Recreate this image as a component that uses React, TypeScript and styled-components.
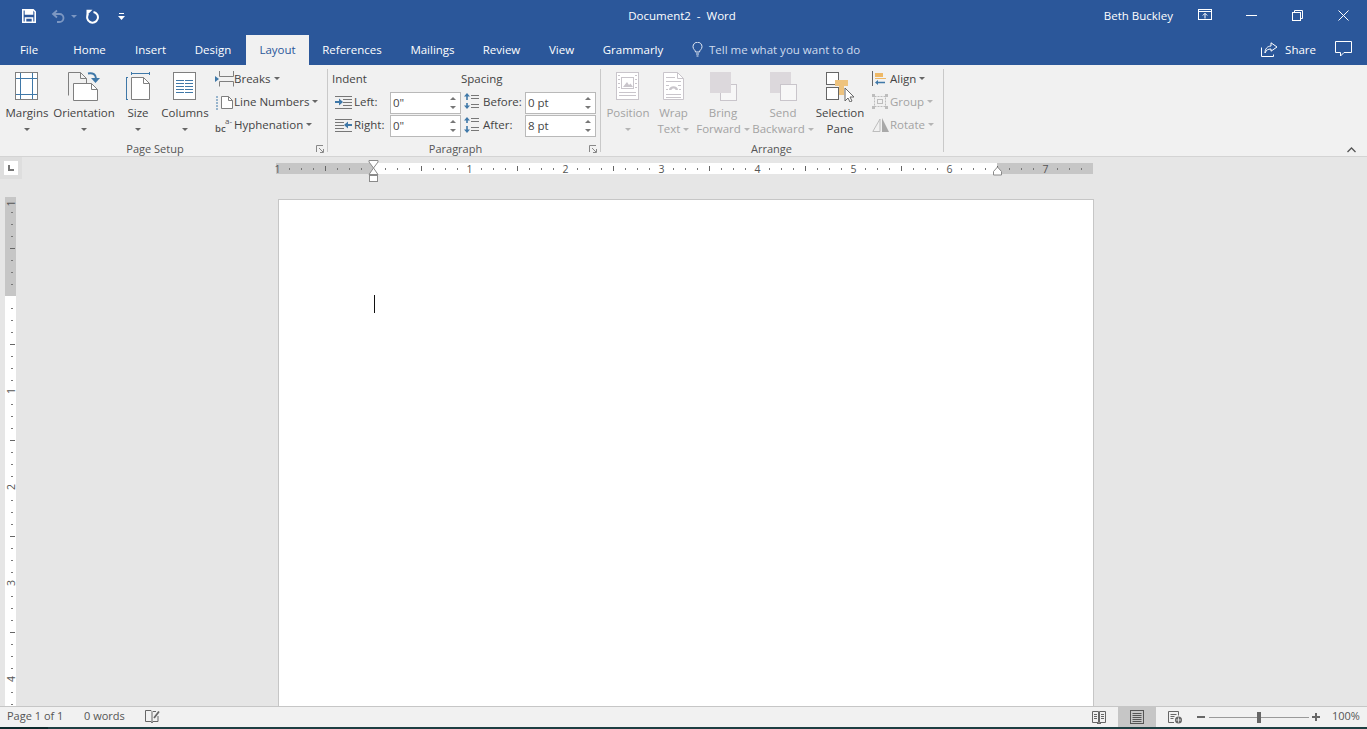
import React from 'react';
import styled, { createGlobalStyle } from 'styled-components';

const GlobalStyle = createGlobalStyle`
  html, body { margin: 0; padding: 0; background: #f1f1f1; overflow: hidden; }
  * { box-sizing: border-box; }
  body { font-family: "Open Sans", "Noto Sans", sans-serif; font-size: 11.5px; color: #444; }
  svg { display: block; flex: none; }
`;

const BLUE = '#3f78a8';
const GRAY = '#7f7f7f';

const Shell = styled.div`
  width: 1367px;
  height: 729px;
  display: flex;
  flex-direction: column;
  overflow: hidden;
`;

/* title bar */
const TitleBar = styled.div`
  height: 35px;
  flex: none;
  background: #2b579a;
  color: #fff;
  display: grid;
  grid-template-columns: 1fr auto 1fr;
  align-items: center;
`;

const Qat = styled.div`
  display: flex;
  align-items: center;
  padding: 0 0 3px 21px;
`;

const QatSlot = styled.div<{ $w: number }>`
  width: ${(p) => p.$w}px;
  display: flex;
  align-items: center;
`;

const DocTitle = styled.div`
  font-size: 11.5px;
  padding-right: 3px;
  margin-top: -5px;
  white-space: pre;
`;

const TitleRight = styled.div`
  display: flex;
  align-items: center;
  justify-content: flex-end;
  height: 100%;
  padding-right: 1px;
`;

const UserName = styled.div`
  margin-right: 9px;
  margin-top: -5px;
`;

const WinButton = styled.div`
  width: 46px;
  height: 30px;
  margin-bottom: 5px;
  display: flex;
  align-items: center;
  justify-content: center;
`;

/* tabs */
const TabBar = styled.div`
  height: 30px;
  flex: none;
  background: #2b579a;
  display: flex;
  align-items: stretch;
`;

const Tab = styled.div<{ $w: number; $active?: boolean }>`
  width: ${(p) => p.$w}px;
  padding-bottom: 2px;
  display: flex;
  align-items: center;
  justify-content: center;
  color: ${(p) => (p.$active ? '#2b579a' : '#fff')};
  background: ${(p) => (p.$active ? '#f1f1f1' : 'transparent')};
`;

const TellMe = styled.div`
  display: flex;
  align-items: center;
  gap: 6px;
  margin-left: 16px;
  padding-bottom: 2px;
  color: #cfdcee;
`;

const ShareArea = styled.div`
  margin-left: auto;
  display: flex;
  align-items: center;
  color: #fff;
  padding: 0 15px 2px 0;
`;

const ShareLabel = styled.span`
  margin: 0 19px 0 7px;
`;

/* ribbon */
const Ribbon = styled.div`
  height: 92px;
  flex: none;
  background: #f1f1f1;
  border-bottom: 1px solid #d4d4d4;
  display: flex;
  position: relative;
`;

const Group = styled.div<{ $w: number }>`
  width: ${(p) => p.$w}px;
  height: 89px;
  margin-top: 2px;
  display: flex;
  flex-direction: column;
  position: relative;
  &::after {
    content: '';
    position: absolute;
    top: 2px;
    bottom: 4px;
    right: 0;
    width: 1px;
    background: #c9c9c9;
  }
`;

const GroupBody = styled.div<{ $inset?: number }>`
  flex: 1;
  display: flex;
  align-items: flex-start;
  padding-left: ${(p) => p.$inset ?? 0}px;
`;

const GroupLabel = styled.div<{ $pull?: number }>`
  height: 15px;
  line-height: 15px;
  text-align: center;
  color: #555;
  font-size: 11px;
  padding-right: ${(p) => p.$pull ?? 0}px;
`;

const Launcher = styled.div`
  position: absolute;
  right: 4px;
  bottom: 3px;
`;

const Collapse = styled.div`
  position: absolute;
  right: 11px;
  bottom: 3px;
`;

const BigButton = styled.div<{ $w: number; $disabled?: boolean }>`
  width: ${(p) => p.$w}px;
  flex: none;
  display: flex;
  flex-direction: column;
  align-items: center;
  color: ${(p) => (p.$disabled ? '#a3a3a3' : '#444')};
`;

const BigIcon = styled.div`
  height: 38px;
  padding-top: 5px;
  display: flex;
  align-items: flex-start;
  justify-content: center;
`;

const BigLabel = styled.div`
  line-height: 16px;
  display: flex;
  align-items: center;
  gap: 3px;
  white-space: nowrap;
`;

const Caret = styled.i<{ $light?: boolean }>`
  display: block;
  width: 0;
  height: 0;
  border-left: 3px solid transparent;
  border-right: 3px solid transparent;
  border-top: 3px solid ${(p) => (p.$light ? '#b5b5b5' : '#666')};
`;

const UndoCaret = styled(Caret)`
  margin-left: 5px;
  border-top-color: #7c97c2;
`;

const CaretRow = styled.div`
  height: 16px;
  display: flex;
  align-items: center;
  justify-content: center;
`;

const SmallStack = styled.div<{ $gap: number }>`
  margin-left: ${(p) => p.$gap}px;
  display: flex;
  flex-direction: column;
`;

const SmallButton = styled.div<{ $disabled?: boolean }>`
  height: 23px;
  display: flex;
  align-items: center;
  white-space: nowrap;
  color: ${(p) => (p.$disabled ? '#a3a3a3' : '#444')};
`;

const SmallIcon = styled.div<{ $w: number }>`
  width: ${(p) => p.$w}px;
  display: flex;
  align-items: center;
`;

const SmallText = styled.span`
  margin-right: 3px;
`;

const FieldColumn = styled.div<{ $w: number; $inset?: number }>`
  width: ${(p) => p.$w}px;
  padding-left: ${(p) => p.$inset ?? 0}px;
  display: flex;
  flex-direction: column;
`;

const FieldHead = styled.div`
  height: 23px;
  line-height: 23px;
`;

const FieldRow = styled.div`
  height: 23px;
  display: flex;
  align-items: center;
`;

const FieldIcon = styled.div<{ $w: number; $inset?: number }>`
  width: ${(p) => p.$w}px;
  padding-left: ${(p) => p.$inset ?? 0}px;
  display: flex;
  justify-content: flex-start;
`;

const FieldName = styled.div<{ $w: number }>`
  width: ${(p) => p.$w}px;
`;

const Spinner = styled.div`
  width: 71px;
  height: 22px;
  margin-top: 3px;
  background: #fff;
  border: 1px solid #b9b9b9;
  display: flex;
  align-items: center;
  padding: 0 0 1px 2px;
`;

const SpinValue = styled.div`
  flex: 1;
  padding-bottom: 1px;
`;

const SpinArrows = styled.div`
  width: 14px;
  display: flex;
  flex-direction: column;
  align-items: center;
  gap: 6px;
`;

const SpinUp = styled.i`
  display: block;
  width: 0;
  height: 0;
  border-left: 3px solid transparent;
  border-right: 3px solid transparent;
  border-bottom: 3px solid #777;
`;

const SpinDown = styled(SpinUp)`
  border-bottom: 0;
  border-top: 3px solid #777;
`;

/* workspace */
const Workspace = styled.div`
  flex: 1;
  min-height: 0;
  background: #e6e6e6;
  display: flex;
`;

const LeftRail = styled.div`
  width: 22px;
  flex: none;
  display: flex;
  flex-direction: column;
`;

const TabStop = styled.div`
  width: 22px;
  height: 22px;
  flex: none;
  background: #dedede;
  display: flex;
  align-items: center;
  justify-content: center;
`;

const TabStopFace = styled.div`
  width: 14px;
  height: 14px;
  background: #fff;
  display: flex;
  align-items: center;
  justify-content: center;
`;

const VRulerSlot = styled.div`
  flex: none;
  margin: 18px 0 0 5px;
`;

const PageColumn = styled.div`
  flex: 1;
  min-width: 0;
  display: flex;
  flex-direction: column;
`;

const HRulerSlot = styled.div`
  height: 42px;
  flex: none;
  padding: 3px 0 0 251px;
`;

const Page = styled.div`
  width: 816px;
  flex: 1;
  margin-left: 256px;
  background: #fff;
  border: 1px solid #c6c6c6;
  border-bottom: 0;
  padding: 95px 0 0 95px;
`;

const TextCursor = styled.div`
  width: 1px;
  height: 18px;
  background: #111;
`;

/* status bar */
const StatusBar = styled.div`
  height: 21px;
  flex: none;
  background: #f1f1f1;
  border-top: 1px solid #c6c6c6;
  display: flex;
  align-items: center;
  font-size: 11px;
  color: #555;
  padding-left: 7px;
`;

const StatusItem = styled.div<{ $w: number }>`
  width: ${(p) => p.$w}px;
  padding-bottom: 4px;
`;

const ViewButton = styled.div<{ $w: number; $active?: boolean }>`
  width: ${(p) => p.$w}px;
  height: 20px;
  background: ${(p) => (p.$active ? '#c6c6c6' : 'transparent')};
  display: flex;
  align-items: center;
  justify-content: center;
`;

const StatusRight = styled.div`
  margin-left: auto;
  display: flex;
  align-items: center;
`;

const ZoomTrack = styled.div`
  width: 100px;
  height: 1px;
  margin: 0 3px 0 4px;
  background: #9a9a9a;
  position: relative;
`;

const ZoomThumb = styled.div`
  position: absolute;
  left: 48px;
  top: -5px;
  width: 4px;
  height: 11px;
  background: #666;
`;

const ZoomSign = styled.div`
  width: 8px;
  height: 8px;
  position: relative;
  &::before {
    content: '';
    position: absolute;
    left: 0;
    right: 0;
    top: 3px;
    height: 2px;
    background: #666;
  }
`;

const ZoomMinus = styled(ZoomSign)`
  margin-left: 3px;
`;

const ZoomPlus = styled(ZoomSign)`
  &::after {
    content: '';
    position: absolute;
    top: 0;
    bottom: 0;
    left: 3px;
    width: 2px;
    background: #666;
  }
`;

const ZoomPercent = styled.div`
  width: 47px;
  padding: 0 0 4px 12px;
`;

const DesktopEdge = styled.div`
  height: 2px;
  flex: none;
  background: linear-gradient(90deg, #0d2a2c 0 48px, #1d3f42 48px 100%);
`;

/* icons */
const SaveIcon = () => (
  <svg width="16" height="16" viewBox="0 0 16 16" fill="none" stroke="#fff" strokeWidth="1.6">
    <path d="M1.800 1.800h10.400l2 2v10.400H1.800z" />
    <path d="M4.500 2v4h7V2" fill="#fff" />
    <path d="M4.500 14v-4h7v4" />
  </svg>
);

const UndoIcon = () => (
  <svg width="15" height="14" viewBox="0 0 15 14" fill="none" stroke="#7c97c2" strokeWidth="1.8">
    <path d="M6 1.500 2 5l4 3.500" />
    <path d="M2.500 5h6a4 4 0 0 1 0 8H6" />
  </svg>
);

const RedoIcon = () => (
  <svg width="14" height="15" viewBox="0 0 14 15" fill="none" stroke="#fff" strokeWidth="2">
    <path d="M8.500 2.900A5.400 5.400 0 1 1 3.200 5" />
    <path d="M1.500.800h6L1.500 6.800z" fill="#fff" stroke="none" />
  </svg>
);

const CustomizeIcon = () => (
  <svg width="7" height="7" viewBox="0 0 7 7" fill="#fff">
    <rect x="1" y="0" width="5" height="1" />
    <path d="M0 3h7L3.500 7z" />
  </svg>
);

const RibbonOptionsIcon = () => (
  <svg width="14" height="12" viewBox="0 0 14 12" fill="none" stroke="#fff">
    <rect x=".5" y=".5" width="13" height="10" />
    <path d="M.5 2.500h13M7 9.500V4.500M4.800 6.500 7 4.300l2.200 2.200" />
  </svg>
);

const MinimizeIcon = () => (
  <svg width="11" height="3" viewBox="0 0 11 3" stroke="#fff"><path d="M0 1.500h11" /></svg>
);

const RestoreIcon = () => (
  <svg width="11" height="11" viewBox="0 0 11 11" fill="none" stroke="#fff">
    <rect x=".5" y="2.500" width="8" height="8" />
    <path d="M2.500 2.500v-2h8v8h-2" />
  </svg>
);

const CloseIcon = () => (
  <svg width="11" height="11" viewBox="0 0 11 11" stroke="#fff"><path d="M.5.500l10 10M10.500 .5l-10 10" /></svg>
);

const BulbIcon = () => (
  <svg width="11" height="15" viewBox="0 0 11 15" fill="none" stroke="#e4ebf5">
    <path d="M3.500 10C3.500 8 1 7.500 1 4.700a4.500 4.500 0 0 1 9 0C10 7.500 7.500 8 7.500 10z" />
    <path d="M4 12h3M4.500 14h2" />
  </svg>
);

const ShareIcon = () => (
  <svg width="17" height="15" viewBox="0 0 17 15" fill="none" stroke="#fff">
    <path d="M.5 5.500v9h12v-2" />
    <path d="M10 .8 16 5l-6 4.200V7C7 7 5.200 8 4 11c0-4 2-6.700 6-7z" />
  </svg>
);

const CommentIcon = () => (
  <svg width="17" height="16" viewBox="0 0 17 16" fill="none" stroke="#fff">
    <path d="M.5.500h16v11H9l-3.500 3.500v-3.500H.5z" />
  </svg>
);

const MarginsIcon = () => (
  <svg width="24" height="28" viewBox="0 0 24 28" fill="#fff" stroke={GRAY}>
    <rect x=".5" y=".5" width="22" height="27" />
    <path d="M5.500 1v26M17.500 1v26M1 6.500h21M1 22.500h21" stroke={BLUE} fill="none" />
  </svg>
);

const OrientationIcon = () => (
  <svg width="32" height="30" viewBox="0 0 32 30" fill="#fff" stroke={GRAY}>
    <path d="M.5 23.500V.500h12l6 6v7" fill="none" />
    <path d="M12.500.5v6h6" fill="none" />
    <path d="M5.500 11.500h18l6 6v11h-24z" />
    <path d="M23.500 11.500v6h6" fill="none" />
    <path d="M20 1.500c5-1 8 1 8 5" stroke={BLUE} strokeWidth="2" fill="none" />
    <path d="M23 6h9l-4.500 5z" fill={BLUE} stroke="none" />
  </svg>
);

const SizeIcon = () => (
  <svg width="25" height="30" viewBox="0 0 25 30" fill="#fff" stroke={GRAY}>
    <path d="M5.500 5.500h12l6 6v16h-18z" />
    <path d="M17.500 5.500v6h6" fill="none" />
    <path d="M5.500 1.500h18M5.500 0v3M23.500 0v3M.5 5v23M0 5.500h2M0 27.500h2" stroke={BLUE} fill="none" />
  </svg>
);

const ColumnsIcon = () => (
  <svg width="24" height="28" viewBox="0 0 24 28" fill="#fff" stroke={GRAY}>
    <rect x=".5" y=".5" width="22" height="27" />
    <path d="M3 8.500h17M3 11.500h17M3 14.500h17M3 17.500h17M3 20.500h17" stroke={BLUE} fill="none" />
    <path d="M11.500 7v15" stroke="#fff" fill="none" />
  </svg>
);

const BreaksIcon = () => (
  <svg width="19" height="16" viewBox="0 0 19 16" fill="none" stroke={GRAY}>
    <path d="M4.500 0v5.500h14V0M4.500 15.500v-5h14v5" />
    <path d="M0 5l4 3-4 3z" fill={BLUE} stroke="none" />
  </svg>
);

const LineNumbersIcon = () => (
  <svg width="18" height="16" viewBox="0 0 18 16" fill="#fff" stroke={GRAY}>
    <path d="M6.500 2.500h7l4 4v8h-11z" />
    <path d="M13.500 2.500v4h4" fill="none" />
    <path d="M1 3h3M1 6h3M1 9h3M1 12h3M1 15h3" stroke={BLUE} strokeDasharray="2 1" fill="none" />
  </svg>
);

const HyphenationIcon = () => (
  <svg width="19" height="20" viewBox="0 0 19 20" fill="#555" fontFamily="Open Sans, sans-serif">
    <text x="0" y="17" fontSize="9.500" fontWeight="600">bc</text>
    <text x="10" y="9" fontSize="8">a-</text>
  </svg>
);

const IndentIcon = ({ flip }: { flip?: boolean }) => (
  <svg width="17" height="14" viewBox="0 0 17 14" fill="none" stroke="#777" style={flip ? { transform: 'scaleX(-1)' } : undefined}>
    <path d="M0 1.500h17M8 4.500h9M8 7.500h9M8 10.500h9M0 13.500h17" />
    <path d="M0 7h5" stroke={BLUE} strokeWidth="2" />
    <path d="M4 3.500 8 7l-4 3.500z" fill={BLUE} stroke="none" />
  </svg>
);

const SpacingIcon = ({ flip }: { flip?: boolean }) => (
  <svg width="16" height="17" viewBox="0 0 16 17" fill="none" stroke="#777" style={flip ? { transform: 'scaleY(-1)' } : undefined}>
    <path d="M7 2.500h8M7 5.500h8M7 11.500h8M7 14.500h8" />
    <path d="M3 2v5M3 10v5" stroke={BLUE} strokeWidth="1.600" />
    <path d="M0 3.500 3 0l3 3.500zM0 12.500h6L3 16z" fill={BLUE} stroke="none" />
  </svg>
);

const PositionIcon = () => (
  <svg width="24" height="29" viewBox="0 0 24 29" fill="#fff" stroke="#c9c5cb">
    <rect x=".5" y=".5" width="22" height="27" />
    <rect x="5.500" y="5.500" width="12" height="11" />
    <path d="M7 15l4-5 2 3 1.500-1.500L17 15z" fill="#c9c5cb" stroke="none" />
    <path d="M2 3.500h2M2 7.500h2M2 11.500h2M2 15.500h2M19 3.500h2M19 7.500h2M19 11.500h2M19 15.500h2M3 20.500h17M3 23.500h17" fill="none" />
  </svg>
);

const WrapIcon = () => (
  <svg width="21" height="29" viewBox="0 0 21 29" fill="#fff" stroke="#c9c5cb">
    <path d="M.5.500h14l6 6v21H.5z" />
    <path d="M14.500.5v6h6M3 5.500h9M3 9.500h15M3 13.500h3M15 13.500h3M3 17.500h2M16 17.500h2M3 22.500h15M3 25.500h15" fill="none" />
    <path d="M6 18c0-5 9-5 9 0h-2.500c0-2-4-2-4 0z" fill="#c9c5cb" stroke="none" />
  </svg>
);

const ForwardIcon = () => (
  <svg width="27" height="29" viewBox="0 0 27 29" fill="none">
    <rect x="10.500" y="12.500" width="16" height="16" fill="#f7f7f7" stroke="#c9c5cb" />
    <rect x="0" y="0" width="21" height="21" fill="#dcd8dc" />
  </svg>
);

const BackwardIcon = () => (
  <svg width="27" height="29" viewBox="0 0 27 29" fill="none">
    <rect x="0" y="0" width="21" height="21" fill="#dcd8dc" />
    <rect x="10.500" y="12.500" width="16" height="16" fill="#f7f7f7" stroke="#c9c5cb" />
  </svg>
);

const SelectionIcon = () => (
  <svg width="28" height="30" viewBox="0 0 28 30" fill="none">
    <rect x=".5" y=".5" width="12" height="12" fill="#fff" stroke="#666" />
    <rect x=".5" y="15.500" width="12" height="12" fill="#fff" stroke="#666" />
    <path d="M9 8h13v6h-4v9h-5v-9H9z" fill="#eec37e" />
    <path d="M19 16v13l3-3 2 4 2-1-2-4h4z" fill="#fff" stroke="#666" />
  </svg>
);

const AlignIcon = () => (
  <svg width="14" height="15" viewBox="0 0 14 15" fill="none">
    <path d="M.5 0v15" stroke="#666" />
    <rect x="3" y="2" width="8" height="4" fill="#eeb866" />
    <rect x="3" y="7" width="11" height="1" fill="#eeb866" />
    <path d="M3 11.500l3-2.500v1.800h7v1.400H6V14z" fill={BLUE} />
  </svg>
);

const GroupIcon = () => (
  <svg width="16" height="15" viewBox="0 0 16 15" fill="none" stroke="#bdbdbd">
    <rect x="2.500" y="2.500" width="11" height="10" strokeDasharray="2 1" />
    <rect x="5.500" y="5.500" width="5" height="4" />
    <path d="M0 0h3v3H0zM13 0h3v3h-3zM0 12h3v3H0zM13 12h3v3h-3z" fill="#bdbdbd" stroke="none" />
  </svg>
);

const RotateIcon = () => (
  <svg width="17" height="14" viewBox="0 0 17 14" fill="none" stroke="#bdbdbd">
    <path d="M8 1 .8 13.500H8z" />
    <path d="M10 0v14h7z" fill="#a9a9a9" stroke="none" />
  </svg>
);

const LauncherIcon = () => (
  <svg width="8" height="8" viewBox="0 0 8 8" fill="none" stroke="#888">
    <path d="M.5 7V.5H7" />
    <path d="M3 3l4 4M4 7.500h3.500V4" />
  </svg>
);

const ChevronUp = () => (
  <svg width="9" height="6" viewBox="0 0 9 6" fill="none" stroke="#555" strokeWidth="1.300">
    <path d="M.5 5 4.500 1l4 4" />
  </svg>
);

const ReadIcon = () => (
  <svg width="14" height="13" viewBox="0 0 14 13" fill="none" stroke="#666">
    <path d="M.5.500h6v11h-6zM7.500.500h6v11h-6zM2 3.500h3M2 5.500h3M2 7.500h3M9 3.500h3M9 5.500h3M9 7.500h3M5 12.500h4" />
  </svg>
);

const PrintIcon = () => (
  <svg width="14" height="14" viewBox="0 0 14 14" fill="none" stroke="#555">
    <rect x=".5" y=".5" width="13" height="13" />
    <path d="M2.500 3.500h9M2.500 5.500h9M2.500 7.500h9M2.500 9.500h9M2.500 11.500h9" />
  </svg>
);

const WebIcon = () => (
  <svg width="15" height="13" viewBox="0 0 15 13" fill="none" stroke="#666">
    <path d="M6 11.500H.5V.500h10v4M2.500 3.500h6M2.500 5.500h4M2.500 7.500h3" />
    <circle cx="10.500" cy="9" r="3.500" fill="#666" stroke="none" />
    <path d="M8 9h5M10.500 6.500v5" stroke="#fff" strokeWidth=".7" />
  </svg>
);

const ProofIcon = () => (
  <svg width="15" height="14" viewBox="0 0 15 14" fill="none" stroke="#666">
    <path d="M6 11.500H.5V.500H6l1 1v10.500M7 13l-1-1.500M7 13l1-1.500" />
    <path d="M8 1.500h3M13 6v5.500H8" />
    <path d="M9 8l5-6.500" strokeWidth="1.800" />
  </svg>
);

const StopGlyph = () => (
  <svg width="6" height="6" viewBox="0 0 6 6" fill="#777"><path d="M0 0h2v4h4v2H0z" /></svg>
);

/* rulers, drawn from the inch scale: 96px an inch, a tick each eighth */
const ticks = (from: number, to: number) => {
  const out: number[] = [];
  for (let i = from; i <= to; i++) out.push(i);
  return out;
};

const HRuler = () => {
  const zero = 97;
  return (
    <svg width="826" height="24" viewBox="-3 0 826 24">
      <rect x="0" y="3" width="817" height="11" fill="#c6c6c6" />
      <rect x={zero} y="3" width="624" height="11" fill="#fff" />
      {ticks(-8, 59).map((i) => {
        const x = zero + i * 12 + 0.5;
        if (i % 8 === 0) {
          if (i === 0) return null;
          return (
            <text key={i} x={x} y="12.500" fontSize="10.500" fill="#555" textAnchor="middle" fontFamily="Open Sans, sans-serif">
              {Math.abs(i / 8)}
            </text>
          );
        }
        if (i % 4 === 0) return <path key={i} d={`M${x} 6v5`} stroke="#666" />;
        return <rect key={i} x={x - 0.5} y="8" width="1" height="2" fill="#777" />;
      })}
      <path d="M93 .5h9v1.500L97.500 8 93 2zM97.500 8l4.500 6.500h-9z" fill="#fff" stroke="#8a8a8a" />
      <rect x="93.500" y="15.500" width="8" height="6" fill="#fff" stroke="#8a8a8a" />
      <path d="M721.500 7l4 4.500V15h-8v-3.500z" fill="#fff" stroke="#8a8a8a" />
    </svg>
  );
};

const VRuler = () => {
  const zero = 99;
  return (
    <svg width="11" height="509" viewBox="0 0 11 509" overflow="visible">
      <rect x="0" y="0" width="11" height="509" fill="#fff" />
      <rect x="0" y="0" width="11" height={zero} fill="#c6c6c6" />
      {ticks(-8, 34).map((i) => {
        const y = zero + i * 12 + 0.5;
        if (i % 8 === 0) {
          if (i === 0) return null;
          return (
            <text key={i} x="0" y="0" fontSize="10.500" fill="#555" textAnchor="middle" fontFamily="Open Sans, sans-serif" transform={`translate(9.500 ${i < 0 ? y + 3 : y - 1.5}) rotate(-90)`}>
              {Math.abs(i / 8)}
            </text>
          );
        }
        if (i % 4 === 0) return <path key={i} d={`M5 ${y}h5`} stroke="#666" />;
        return <rect key={i} x="6" y={y - 0.5} width="2" height="1" fill="#777" />;
      })}
    </svg>
  );
};

const tabs = [
  { name: 'File', w: 58 },
  { name: 'Home', w: 63 },
  { name: 'Insert', w: 59 },
  { name: 'Design', w: 66 },
  { name: 'Layout', w: 63, active: true },
  { name: 'References', w: 86 },
  { name: 'Mailings', w: 75 },
  { name: 'Review', w: 63 },
  { name: 'View', w: 57 },
  { name: 'Grammarly', w: 86 },
];

const SpinnerField = ({ value }: { value: string }) => (
  <Spinner>
    <SpinValue>{value}</SpinValue>
    <SpinArrows>
      <SpinUp />
      <SpinDown />
    </SpinArrows>
  </Spinner>
);

export default function App() {
  return (
    <Shell>
      <GlobalStyle />
      <TitleBar>
        <Qat>
          <QatSlot $w={30}><SaveIcon /></QatSlot>
          <QatSlot $w={34}>
            <UndoIcon />
            <UndoCaret />
          </QatSlot>
          <QatSlot $w={33}><RedoIcon /></QatSlot>
          <QatSlot $w={10}><CustomizeIcon /></QatSlot>
        </Qat>
        <DocTitle>Document2  -  Word</DocTitle>
        <TitleRight>
          <UserName>Beth Buckley</UserName>
          <WinButton><RibbonOptionsIcon /></WinButton>
          <WinButton><MinimizeIcon /></WinButton>
          <WinButton><RestoreIcon /></WinButton>
          <WinButton><CloseIcon /></WinButton>
        </TitleRight>
      </TitleBar>

      <TabBar>
        {tabs.map((t) => (
          <Tab key={t.name} $w={t.w} $active={t.active}>{t.name}</Tab>
        ))}
        <TellMe>
          <BulbIcon />
          Tell me what you want to do
        </TellMe>
        <ShareArea>
          <ShareIcon />
          <ShareLabel>Share</ShareLabel>
          <CommentIcon />
        </ShareArea>
      </TabBar>

      <Ribbon>
        <Group $w={328}>
          <GroupBody>
            <BigButton $w={54}>
              <BigIcon><MarginsIcon /></BigIcon>
              <BigLabel>Margins</BigLabel>
              <CaretRow><Caret /></CaretRow>
            </BigButton>
            <BigButton $w={60}>
              <BigIcon><OrientationIcon /></BigIcon>
              <BigLabel>Orientation</BigLabel>
              <CaretRow><Caret /></CaretRow>
            </BigButton>
            <BigButton $w={48}>
              <BigIcon><SizeIcon /></BigIcon>
              <BigLabel>Size</BigLabel>
              <CaretRow><Caret /></CaretRow>
            </BigButton>
            <BigButton $w={46}>
              <BigIcon><ColumnsIcon /></BigIcon>
              <BigLabel>Columns</BigLabel>
              <CaretRow><Caret /></CaretRow>
            </BigButton>
            <SmallStack $gap={7}>
              <SmallButton><SmallIcon $w={19}><BreaksIcon /></SmallIcon><SmallText>Breaks</SmallText><Caret /></SmallButton>
              <SmallButton><SmallIcon $w={19}><LineNumbersIcon /></SmallIcon><SmallText>Line Numbers</SmallText><Caret /></SmallButton>
              <SmallButton><SmallIcon $w={19}><HyphenationIcon /></SmallIcon><SmallText>Hyphenation</SmallText><Caret /></SmallButton>
            </SmallStack>
          </GroupBody>
          <GroupLabel $pull={18}>Page Setup</GroupLabel>
          <Launcher><LauncherIcon /></Launcher>
        </Group>

        <Group $w={273}>
          <GroupBody>
            <FieldColumn $w={133} $inset={4}>
              <FieldHead>Indent</FieldHead>
              <FieldRow><FieldIcon $w={22} $inset={3}><IndentIcon /></FieldIcon><FieldName $w={36}>Left:</FieldName><SpinnerField value={'0"'} /></FieldRow>
              <FieldRow><FieldIcon $w={22} $inset={3}><IndentIcon flip /></FieldIcon><FieldName $w={36}>Right:</FieldName><SpinnerField value={'0"'} /></FieldRow>
            </FieldColumn>
            <FieldColumn $w={136}>
              <FieldHead>Spacing</FieldHead>
              <FieldRow><FieldIcon $w={22} $inset={3}><SpacingIcon /></FieldIcon><FieldName $w={42}>Before:</FieldName><SpinnerField value="0 pt" /></FieldRow>
              <FieldRow><FieldIcon $w={22} $inset={3}><SpacingIcon flip /></FieldIcon><FieldName $w={42}>After:</FieldName><SpinnerField value="8 pt" /></FieldRow>
            </FieldColumn>
          </GroupBody>
          <GroupLabel $pull={18}>Paragraph</GroupLabel>
          <Launcher><LauncherIcon /></Launcher>
        </Group>

        <Group $w={343}>
          <GroupBody $inset={2}>
            <BigButton $w={50} $disabled>
              <BigIcon><PositionIcon /></BigIcon>
              <BigLabel>Position</BigLabel>
              <CaretRow><Caret $light /></CaretRow>
            </BigButton>
            <BigButton $w={41} $disabled>
              <BigIcon><WrapIcon /></BigIcon>
              <BigLabel>Wrap</BigLabel>
              <BigLabel>Text<Caret $light /></BigLabel>
            </BigButton>
            <BigButton $w={58} $disabled>
              <BigIcon><ForwardIcon /></BigIcon>
              <BigLabel>Bring</BigLabel>
              <BigLabel>Forward<Caret $light /></BigLabel>
            </BigButton>
            <BigButton $w={62} $disabled>
              <BigIcon><BackwardIcon /></BigIcon>
              <BigLabel>Send</BigLabel>
              <BigLabel>Backward<Caret $light /></BigLabel>
            </BigButton>
            <BigButton $w={52}>
              <BigIcon><SelectionIcon /></BigIcon>
              <BigLabel>Selection</BigLabel>
              <BigLabel>Pane</BigLabel>
            </BigButton>
            <SmallStack $gap={6}>
              <SmallButton><SmallIcon $w={18}><AlignIcon /></SmallIcon><SmallText>Align</SmallText><Caret /></SmallButton>
              <SmallButton $disabled><SmallIcon $w={18}><GroupIcon /></SmallIcon><SmallText>Group</SmallText><Caret $light /></SmallButton>
              <SmallButton $disabled><SmallIcon $w={18}><RotateIcon /></SmallIcon><SmallText>Rotate</SmallText><Caret $light /></SmallButton>
            </SmallStack>
          </GroupBody>
          <GroupLabel $pull={2}>Arrange</GroupLabel>
        </Group>
        <Collapse><ChevronUp /></Collapse>
      </Ribbon>

      <Workspace>
        <LeftRail>
          <TabStop><TabStopFace><StopGlyph /></TabStopFace></TabStop>
          <VRulerSlot><VRuler /></VRulerSlot>
        </LeftRail>
        <PageColumn>
          <HRulerSlot><HRuler /></HRulerSlot>
          <Page><TextCursor /></Page>
        </PageColumn>
      </Workspace>

      <StatusBar>
        <StatusItem $w={77}>Page 1 of 1</StatusItem>
        <StatusItem $w={61}>0 words</StatusItem>
        <ProofIcon />
        <StatusRight>
          <ViewButton $w={38}><ReadIcon /></ViewButton>
          <ViewButton $w={38} $active><PrintIcon /></ViewButton>
          <ViewButton $w={38}><WebIcon /></ViewButton>
          <ZoomMinus />
          <ZoomTrack><ZoomThumb /></ZoomTrack>
          <ZoomPlus />
          <ZoomPercent>100%</ZoomPercent>
        </StatusRight>
      </StatusBar>
      <DesktopEdge />
    </Shell>
  );
}
